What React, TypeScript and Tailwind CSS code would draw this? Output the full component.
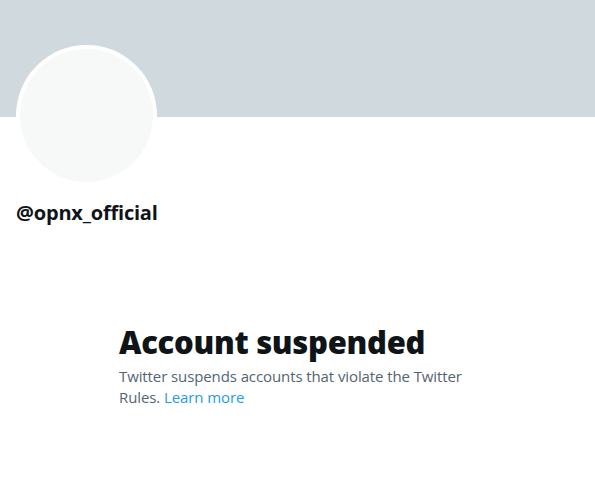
import React from "react";

export default function App() {
  return (
    <div className="w-[595px] h-[499px] bg-white overflow-hidden" style={{ fontFamily: '"Open Sans", "Noto Sans", Arial, sans-serif' }}>
      {/* Banner */}
      <div className="h-[117px] bg-[#cfd9de]" />

      {/* Avatar + handle */}
      <div className="px-4">
        <div className="-mt-[72px] w-[141px] h-[141px] rounded-full bg-white p-[4px]">
          <div className="w-full h-full rounded-full bg-[#f7f9f9]" />
        </div>
        <div className="mt-[15px] text-[20px] leading-6 font-bold text-[#0f1419] tracking-[-0.2px]">
          @opnx_official
        </div>
      </div>

      {/* Empty state */}
      <div className="pl-[119px] pr-[120px] pt-[99px]">
        <h1 className="text-[31px] leading-9 font-extrabold text-[#0f1419] tracking-[-0.3px]">
          Account suspended
        </h1>
        <p className="mt-[6px] text-[15px] leading-[21px] text-[#536471] tracking-[-0.1px]">
          Twitter suspends accounts that violate the Twitter Rules.{" "}
          <a href="#" className="text-[#1d9bf0]">Learn more</a>
        </p>
      </div>
    </div>
  );
}
